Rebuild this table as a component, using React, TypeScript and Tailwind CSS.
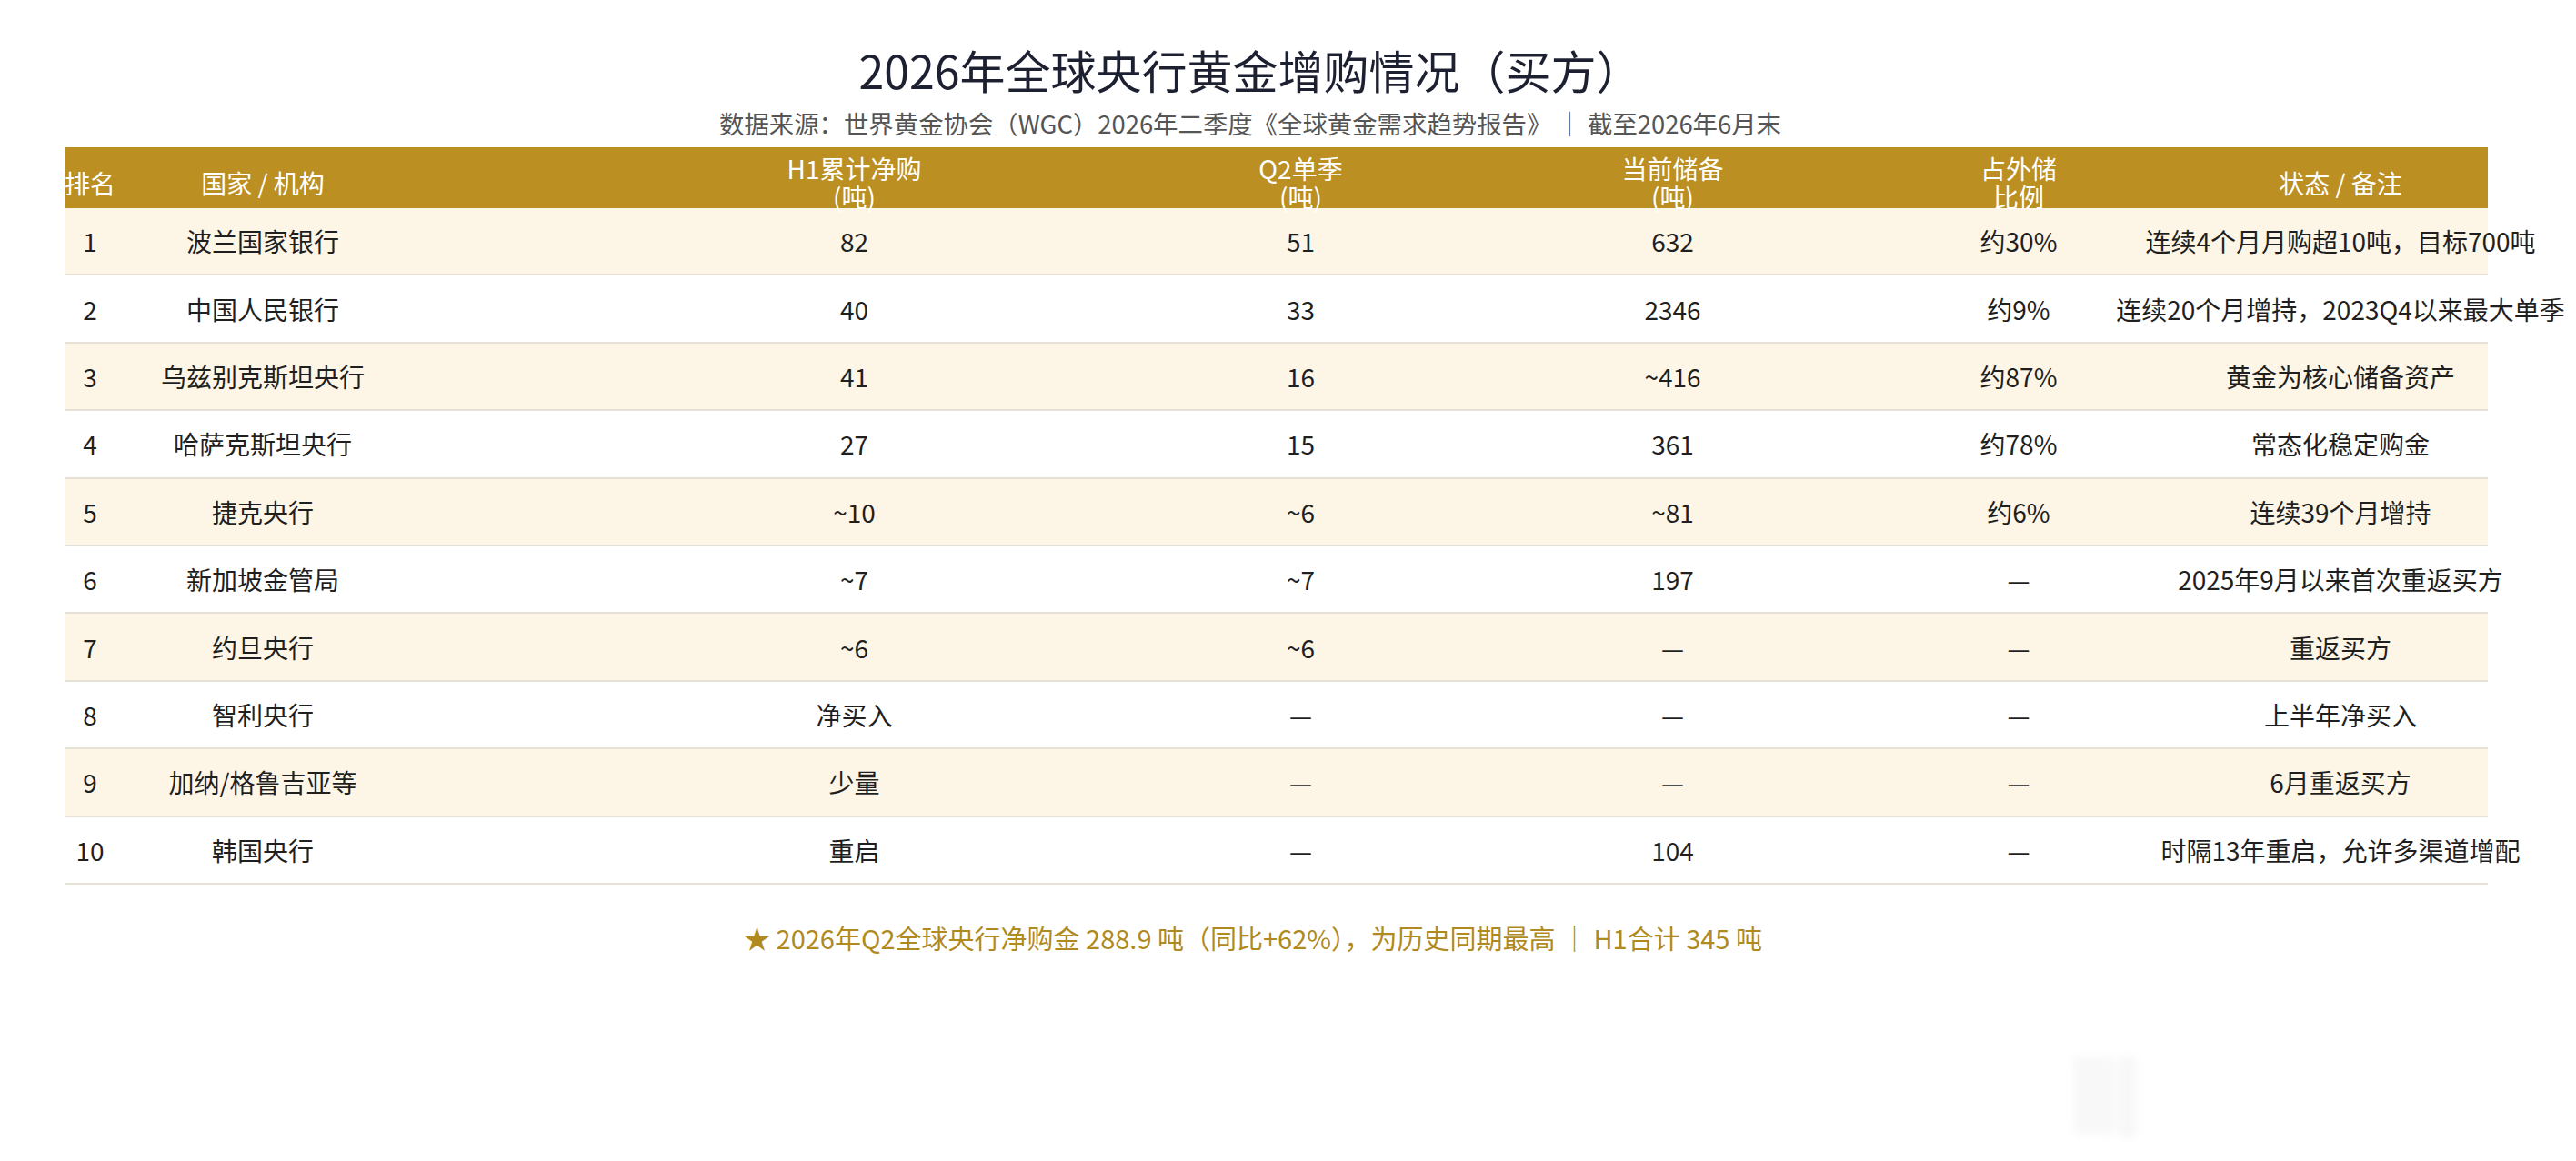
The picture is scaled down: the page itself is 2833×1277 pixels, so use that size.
const rows = [
  ["1", "波兰国家银行", "82", "51", "632", "约30%", "连续4个月月购超10吨，目标700吨"],
  ["2", "中国人民银行", "40", "33", "2346", "约9%", "连续20个月增持，2023Q4以来最大单季"],
  ["3", "乌兹别克斯坦央行", "41", "16", "~416", "约87%", "黄金为核心储备资产"],
  ["4", "哈萨克斯坦央行", "27", "15", "361", "约78%", "常态化稳定购金"],
  ["5", "捷克央行", "~10", "~6", "~81", "约6%", "连续39个月增持"],
  ["6", "新加坡金管局", "~7", "~7", "197", "—", "2025年9月以来首次重返买方"],
  ["7", "约旦央行", "~6", "~6", "—", "—", "重返买方"],
  ["8", "智利央行", "净买入", "—", "—", "—", "上半年净买入"],
  ["9", "加纳/格鲁吉亚等", "少量", "—", "—", "—", "6月重返买方"],
  ["10", "韩国央行", "重启", "—", "104", "—", "时隔13年重启，允许多渠道增配"],
];

const headers = [
  ["排名"],
  ["国家 / 机构"],
  ["H1累计净购", "(吨)"],
  ["Q2单季", "(吨)"],
  ["当前储备", "(吨)"],
  ["占外储", "比例"],
  ["状态 / 备注"],
];

// padding shifts each column's centre to where the reference has it
const colPad = ["pr-[68px]", "pr-[230px]", "pl-[80px]", "pl-[41px]", "pl-[14px]", "pl-[13px]", "pl-[15px]"];
const gridCols = "grid grid-cols-[122px_420px_571px_450px_395px_367px_339px]";

export default function App() {
  return (
    <div className="relative w-[2833px] h-[1277px] bg-white overflow-hidden font-['Noto_Sans_CJK_SC','Noto_Sans',sans-serif]">
      <div className="w-[2750px] pt-[46px]">
        <h1 className="text-center text-[50px] leading-[60px] font-normal text-[#1d2030]">
          2026年全球央行黄金增购情况（买方）
        </h1>
        <p className="mt-[11px] text-center text-[27.4px] leading-[36px] text-[#555555]">
          数据来源：世界黄金协会（WGC）2026年二季度《全球黄金需求趋势报告》 ｜ 截至2026年6月末
        </p>
      </div>

      <div className="ml-[72px] mt-[9px] w-[2664px]">
        <div className={`${gridCols} h-[67px] bg-[#bb8f21] text-white text-[28px] leading-[31px]`}>
          {headers.map((h, i) => (
            <div key={i} className={`flex items-center justify-center whitespace-nowrap pt-[8px] ${colPad[i]}`}>
              <div className="text-center">
                {h.map((line, j) => (
                  <div key={j}>{line}</div>
                ))}
              </div>
            </div>
          ))}
        </div>

        {rows.map((r, ri) => (
          <div
            key={ri}
            className={`${gridCols} h-[74.4px] border-b-2 border-[#e5e1d7] text-[28px] leading-[36px] text-[#1f1f1f] ${
              ri % 2 === 0 ? "bg-[#fdf6e7]" : "bg-white"
            }`}
          >
            {r.map((cell, ci) => (
              <div key={ci} className={`flex items-center justify-center whitespace-nowrap ${colPad[ci]}`}>
                {cell}
              </div>
            ))}
          </div>
        ))}
      </div>

      <div className="w-[2756px] mt-[38px] text-center text-[29px] leading-[40px] text-[#b08a1e]">
        ★ 2026年Q2全球央行净购金 288.9 吨（同比+62%），为历史同期最高 ｜ H1合计 345 吨
      </div>

      {/* faint watermark bottom right */}
      <div className="absolute left-[2280px] top-[1162px] flex gap-[4px] opacity-40 blur-[4px]">
        <div className="w-[46px] h-[86px] rounded-[6px] bg-[#eeeeee]" />
        <div className="w-[20px] h-[90px] rounded-[6px] bg-[#ececec]" />
      </div>
    </div>
  );
}
